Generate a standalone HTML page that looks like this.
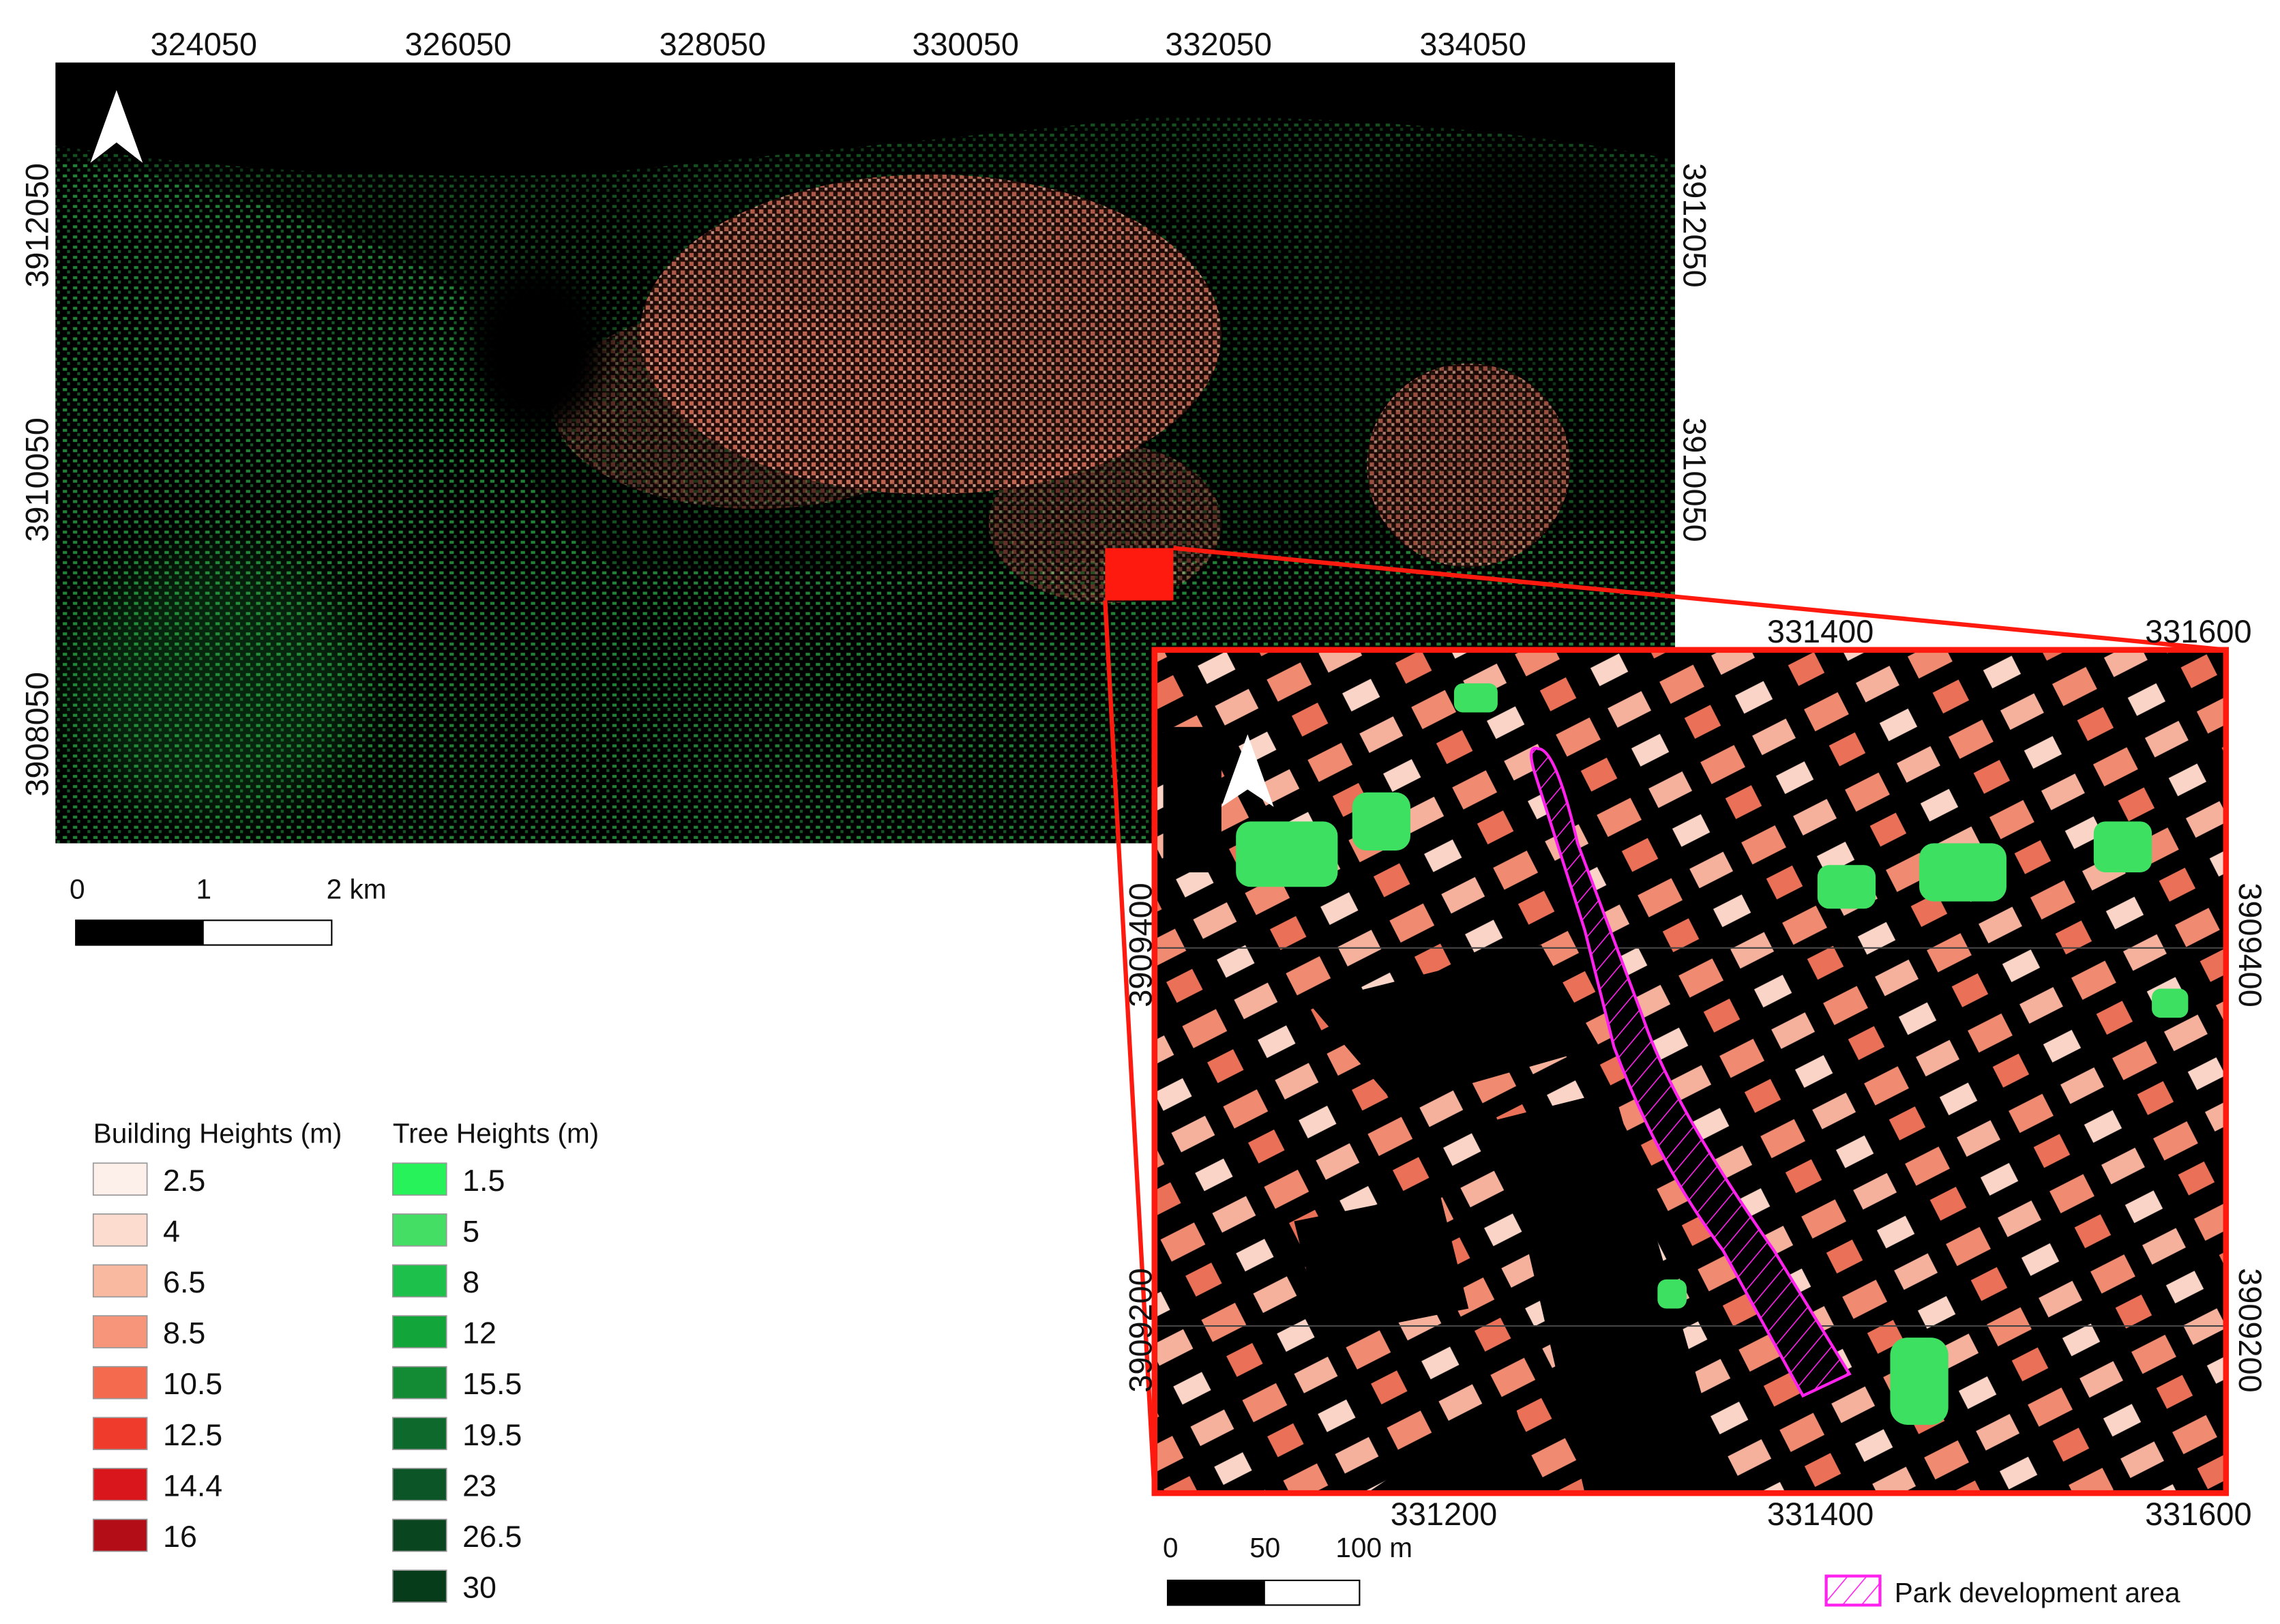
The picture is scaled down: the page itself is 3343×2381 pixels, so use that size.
<!DOCTYPE html>
<html><head><meta charset="utf-8"><style>
html,body{margin:0;padding:0;background:#fff;}
svg{display:block}
text{font-family:"Liberation Sans",sans-serif;fill:#111}
</style></head><body>
<svg width="3343" height="2381" viewBox="0 0 1568 1117" xmlns="http://www.w3.org/2000/svg">
<defs>
<filter id="b20" x="-50%" y="-50%" width="200%" height="200%"><feGaussianBlur stdDeviation="20"/></filter>
<filter id="b8" x="-50%" y="-50%" width="200%" height="200%"><feGaussianBlur stdDeviation="8"/></filter>
<pattern id="gn" width="7" height="7" patternUnits="userSpaceOnUse">
<rect width="7" height="7" fill="#000"/><rect x="1" y="1" width="3" height="2" fill="#2fb24a"/><rect x="4" y="4" width="2" height="2" fill="#1e7a33"/>
</pattern>
<pattern id="rd" width="6" height="6" patternUnits="userSpaceOnUse">
<rect width="6" height="6" fill="#2a0c08"/><rect x="0" y="0" width="3" height="3" fill="#d9705c"/><rect x="3" y="3" width="2" height="2" fill="#f0b0a0"/>
</pattern>
<pattern id="blk" width="80" height="62" patternUnits="userSpaceOnUse" patternTransform="rotate(-27)">
<rect width="80" height="62" fill="#000"/>
<rect x="4" y="6" width="26" height="17" fill="#f08a70"/>
<rect x="44" y="6" width="26" height="15" fill="#f5b19c"/>
<rect x="8" y="36" width="20" height="16" fill="#ea7158"/>
<rect x="46" y="38" width="22" height="14" fill="#f9d4c7"/>
</pattern>
<pattern id="hatch" width="10" height="10" patternUnits="userSpaceOnUse" patternTransform="rotate(40)">
<line x1="0" y1="0" x2="0" y2="10" stroke="#ff22ee" stroke-width="1.5"/>
</pattern>
<clipPath id="mc"><rect x="38" y="43" width="1114" height="537"/></clipPath>
<clipPath id="ic"><rect x="794" y="447" width="737" height="580"/></clipPath>
</defs>

<!-- main map -->
<rect x="38" y="43" width="1114" height="537" fill="#000"/>
<g clip-path="url(#mc)">
<path d="M38 100 Q200 125 400 120 Q600 100 800 80 Q1000 80 1152 110 L1152 580 L38 580Z" fill="url(#gn)" opacity="0.45"/>
<path d="M38 110 Q200 130 320 200 Q340 330 420 390 Q700 400 1152 360 L1152 580 L38 580Z" fill="url(#gn)" opacity="0.5"/>
<ellipse cx="640" cy="230" rx="200" ry="110" fill="url(#rd)" opacity="0.8"/>
<ellipse cx="1010" cy="320" rx="70" ry="70" fill="url(#rd)" opacity="0.7"/>
<ellipse cx="520" cy="280" rx="140" ry="70" fill="url(#rd)" opacity="0.4"/>
<ellipse cx="760" cy="360" rx="80" ry="55" fill="url(#rd)" opacity="0.45"/>
<ellipse cx="370" cy="240" rx="45" ry="55" fill="#000" filter="url(#b8)"/>
<ellipse cx="1030" cy="170" rx="110" ry="70" fill="#000" opacity="0.55" filter="url(#b8)"/>
<ellipse cx="150" cy="470" rx="100" ry="90" fill="#2ad150" opacity="0.18" filter="url(#b20)"/>
<rect x="760" y="377" width="47" height="36" fill="#ff1a10"/>
</g>
<path d="M80 62 L62 112 L80 98 L98 112Z" fill="#fff"/>

<text x="140" y="38" font-size="22" text-anchor="middle">324050</text>
<text x="315" y="38" font-size="22" text-anchor="middle">326050</text>
<text x="490" y="38" font-size="22" text-anchor="middle">328050</text>
<text x="664" y="38" font-size="22" text-anchor="middle">330050</text>
<text x="838" y="38" font-size="22" text-anchor="middle">332050</text>
<text x="1013" y="38" font-size="22" text-anchor="middle">334050</text>
<text transform="translate(33,155) rotate(-90)" font-size="22" text-anchor="middle">3912050</text>
<text transform="translate(33,330) rotate(-90)" font-size="22" text-anchor="middle">3910050</text>
<text transform="translate(33,505) rotate(-90)" font-size="22" text-anchor="middle">3908050</text>
<text transform="translate(1158,155) rotate(90)" font-size="22" text-anchor="middle">3912050</text>
<text transform="translate(1158,330) rotate(90)" font-size="22" text-anchor="middle">3910050</text>

<text x="53" y="618" font-size="19" text-anchor="middle">0</text>
<text x="140" y="618" font-size="19" text-anchor="middle">1</text>
<text x="245" y="618" font-size="19" text-anchor="middle">2 km</text>
<rect x="52" y="633" width="176" height="17" fill="#fff" stroke="#000" stroke-width="1"/>
<rect x="52" y="633" width="88" height="17" fill="#000"/>

<line x1="807" y1="377" x2="1531" y2="447" stroke="#ff1a10" stroke-width="3"/>
<line x1="760" y1="413" x2="794" y2="1027" stroke="#ff1a10" stroke-width="3"/>

<!-- inset -->
<rect x="794" y="447" width="737" height="580" fill="url(#blk)"/>
<g clip-path="url(#ic)" fill="#000">
<rect x="800" y="500" width="40" height="100"/>
<path d="M900 690 L1060 650 L1100 720 L960 760Z"/>
<path d="M1030 770 L1110 750 L1190 1027 L1090 1027Z"/>
<path d="M890 840 L990 820 L1010 900 L910 920Z"/>
<path d="M940 1027 L1040 960 L1060 1027Z"/>
</g>
<g fill="#3de060">
<rect x="850" y="565" width="70" height="45" rx="10"/>
<rect x="930" y="545" width="40" height="40" rx="10"/>
<rect x="1250" y="595" width="40" height="30" rx="8"/>
<rect x="1320" y="580" width="60" height="40" rx="10"/>
<rect x="1440" y="565" width="40" height="35" rx="8"/>
<rect x="1300" y="920" width="40" height="60" rx="12"/>
<rect x="1140" y="880" width="20" height="20" rx="6"/>
<rect x="1000" y="470" width="30" height="20" rx="6"/>
<rect x="1480" y="680" width="25" height="20" rx="6"/>
</g>
<line x1="794" y1="652" x2="1531" y2="652" stroke="#444" stroke-width="1"/>
<line x1="794" y1="912" x2="1531" y2="912" stroke="#444" stroke-width="1"/>
<path d="M1058 515 Q1050 512 1055 530 L1090 640 L1110 720 Q1140 800 1185 860 L1240 960 L1272 945 L1220 860 Q1150 760 1130 700 L1085 580 Q1070 515 1058 515Z" fill="#000"/>
<path d="M1058 515 Q1050 512 1055 530 L1090 640 L1110 720 Q1140 800 1185 860 L1240 960 L1272 945 L1220 860 Q1150 760 1130 700 L1085 580 Q1070 515 1058 515Z" fill="url(#hatch)" stroke="#ff22ee" stroke-width="2"/>
<path d="M858 505 L840 555 L858 543 L876 555Z" fill="#fff"/>
<rect x="794" y="447" width="737" height="580" fill="none" stroke="#ff1a10" stroke-width="4"/>

<text x="1252" y="442" font-size="22" text-anchor="middle">331400</text>
<text x="1512" y="442" font-size="22" text-anchor="middle">331600</text>
<text x="993" y="1049" font-size="22" text-anchor="middle">331200</text>
<text x="1252" y="1049" font-size="22" text-anchor="middle">331400</text>
<text x="1512" y="1049" font-size="22" text-anchor="middle">331600</text>
<text transform="translate(792,650) rotate(-90)" font-size="22" text-anchor="middle">3909400</text>
<text transform="translate(792,915) rotate(-90)" font-size="22" text-anchor="middle">3909200</text>
<text transform="translate(1540,650) rotate(90)" font-size="22" text-anchor="middle">3909400</text>
<text transform="translate(1540,915) rotate(90)" font-size="22" text-anchor="middle">3909200</text>

<text x="805" y="1071" font-size="19" text-anchor="middle">0</text>
<text x="870" y="1071" font-size="19" text-anchor="middle">50</text>
<text x="945" y="1071" font-size="19" text-anchor="middle">100 m</text>
<rect x="803" y="1087" width="132" height="17" fill="#fff" stroke="#000"/>
<rect x="803" y="1087" width="67" height="17" fill="#000"/>
<rect x="1256" y="1084" width="37" height="20" fill="url(#hatch)" stroke="#ff22ee" stroke-width="2"/>
<text x="1303" y="1102" font-size="19">Park development area</text>

<text x="64" y="786" font-size="19">Building Heights (m)</text>
<text x="270" y="786" font-size="19">Tree Heights (m)</text>
<g stroke="#999" stroke-width="0.8">
<rect x="64" y="800" width="37" height="22" fill="#fdefea"/>
<rect x="64" y="835" width="37" height="22" fill="#fbdccf"/>
<rect x="64" y="870" width="37" height="22" fill="#f8b9a0"/>
<rect x="64" y="905" width="37" height="22" fill="#f6957a"/>
<rect x="64" y="940" width="37" height="22" fill="#f36a4f"/>
<rect x="64" y="975" width="37" height="22" fill="#ef3b2c"/>
<rect x="64" y="1010" width="37" height="22" fill="#d9161c"/>
<rect x="64" y="1045" width="37" height="22" fill="#b30d17"/>
<rect x="270" y="800" width="37" height="22" fill="#27f25a"/>
<rect x="270" y="835" width="37" height="22" fill="#45de65"/>
<rect x="270" y="870" width="37" height="22" fill="#1dc04a"/>
<rect x="270" y="905" width="37" height="22" fill="#12a53a"/>
<rect x="270" y="940" width="37" height="22" fill="#138a34"/>
<rect x="270" y="975" width="37" height="22" fill="#0d6a2c"/>
<rect x="270" y="1010" width="37" height="22" fill="#0b5527"/>
<rect x="270" y="1045" width="37" height="22" fill="#094620"/>
<rect x="270" y="1080" width="37" height="22" fill="#073c1b"/>
</g>
<g font-size="21">
<text x="112" y="819">2.5</text><text x="112" y="854">4</text><text x="112" y="889">6.5</text><text x="112" y="924">8.5</text>
<text x="112" y="959">10.5</text><text x="112" y="994">12.5</text><text x="112" y="1029">14.4</text><text x="112" y="1064">16</text>
<text x="318" y="819">1.5</text><text x="318" y="854">5</text><text x="318" y="889">8</text><text x="318" y="924">12</text>
<text x="318" y="959">15.5</text><text x="318" y="994">19.5</text><text x="318" y="1029">23</text><text x="318" y="1064">26.5</text><text x="318" y="1099">30</text>
</g>
</svg>
</body></html>
